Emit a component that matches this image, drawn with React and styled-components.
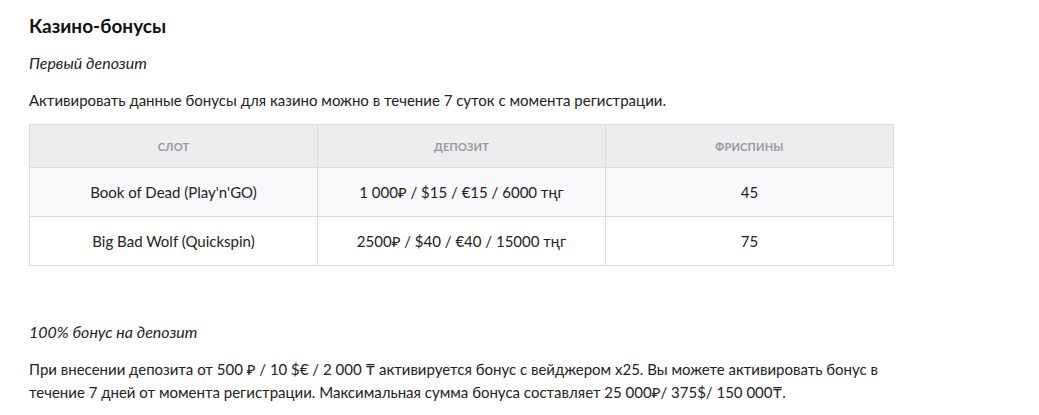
import React from 'react';
import styled, { createGlobalStyle } from 'styled-components';

const GlobalStyle = createGlobalStyle`
  body {
    margin: 0;
    background: #ffffff;
    font-family: 'Lato', 'Noto Sans', sans-serif;
    color: #1d1d1f;
  }
`;

const Page = styled.div`
  padding: 13px 29px 0 29px;
  width: 1039px;
  box-sizing: border-box;
`;

const Title = styled.h2`
  margin: 0 0 13px 0;
  font-size: 19px;
  font-weight: 700;
  line-height: 26px;
  color: #111;
`;

const Subtitle = styled.p`
  margin: ${({ top }) => top || 0}px 0 15px 0;
  font-size: 16px;
  font-style: italic;
  line-height: 22px;
  color: #222;
`;

const Text = styled.p`
  margin: 0 0 12px 0;
  font-size: 15px;
  line-height: 23px;
  color: #222;
  max-width: 870px;
`;

const Table = styled.table`
  width: 865px;
  border-collapse: collapse;
  table-layout: fixed;
  font-size: 15px;
`;

const HeadCell = styled.th`
  height: 40px;
  background: #edecef;
  border: 1px solid #dcdadf;
  color: #9a989d;
  font-size: 11px;
  font-weight: 700;
  text-transform: uppercase;
  letter-spacing: 0.2px;
  text-align: center;
`;

const Row = styled.tr`
  background: ${({ shade }) => (shade ? '#f9f8fa' : '#ffffff')};
`;

const Cell = styled.td`
  height: 46px;
  border: 1px solid #dcdadf;
  text-align: center;
  color: #222;
`;

const rows = [
  { slot: "Book of Dead (Play'n'GO)", deposit: '1 000₽ / $15 / €15 / 6000 тңг', spins: '45' },
  { slot: 'Big Bad Wolf (Quickspin)', deposit: '2500₽ / $40 / €40 / 15000 тңг', spins: '75' },
];

const App = () => (
  <Page>
    <GlobalStyle />
    <Title>Казино-бонусы</Title>
    <Subtitle>Первый депозит</Subtitle>
    <Text>Активировать данные бонусы для казино можно в течение 7 суток с момента регистрации.</Text>
    <Table>
      <thead>
        <tr>
          <HeadCell>Слот</HeadCell>
          <HeadCell>Депозит</HeadCell>
          <HeadCell>Фриспины</HeadCell>
        </tr>
      </thead>
      <tbody>
        {rows.map((r, i) => (
          <Row key={i} shade={i === 0}>
            <Cell>{r.slot}</Cell>
            <Cell>{r.deposit}</Cell>
            <Cell>{r.spins}</Cell>
          </Row>
        ))}
      </tbody>
    </Table>
    <Subtitle top={55}>100% бонус на депозит</Subtitle>
    <Text>
      При внесении депозита от 500 ₽ / 10 $€ / 2 000 ₸ активируется бонус с вейджером x25. Вы можете активировать бонус в
      течение 7 дней от момента регистрации. Максимальная сумма бонуса составляет 25 000₽/ 375$/ 150 000₸.
    </Text>
  </Page>
);

export default App;
